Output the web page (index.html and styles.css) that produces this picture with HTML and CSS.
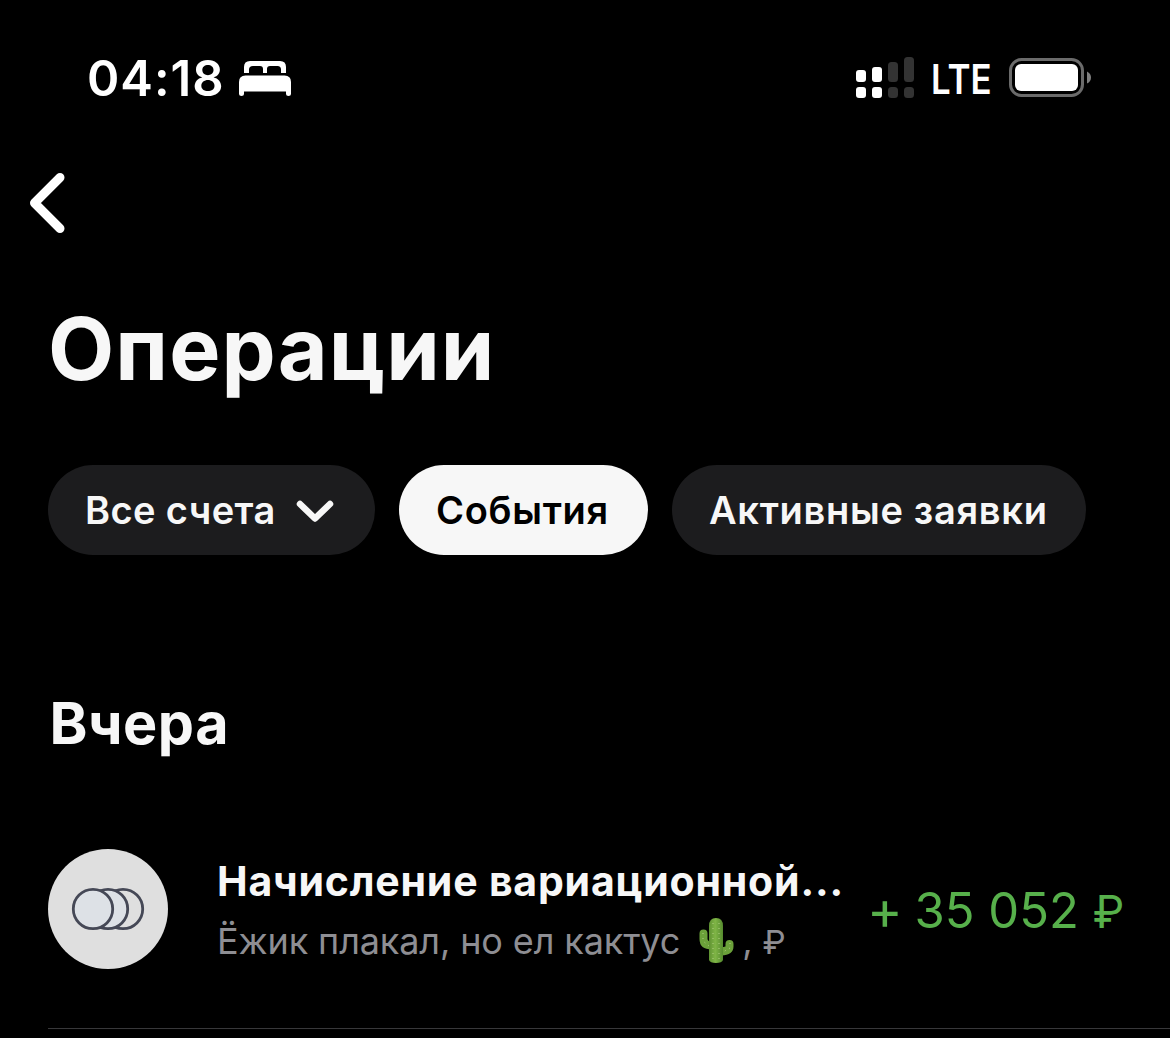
FILE: index.html
```html
<!DOCTYPE html>
<html lang="ru">
<head>
<meta charset="utf-8">
<title>Операции</title>
<link rel="stylesheet" href="styles.css">
</head>
<body>
<header class="status">
  <span class="time">04:18</span>
  <svg class="bed" width="52" height="36" viewBox="0 0 52 36" fill="#fff">
    <path d="M5 12V6Q5 0 11 0H41Q47 0 47 6V12H42V8.500Q42 5 38.500 5H31Q28 5 28 8V12H24V8Q24 5 21 5H14Q10 5 10 8.500V12Z"/>
    <path d="M0 21Q0 14.500 6.500 14.500H45.500Q52 14.500 52 21V33Q52 35 49.500 35Q47 35 47 33V30.500H5V33Q5 35 2.500 35Q0 35 0 33Z"/>
  </svg>
  <svg class="signal" width="58" height="41" viewBox="0 0 58 41">
    <g fill="#fff">
      <rect x="0" y="13" width="10" height="12" rx="3"/><rect x="16" y="10" width="10" height="15" rx="3"/>
      <rect x="0" y="30" width="10" height="11" rx="3"/><rect x="16" y="30" width="10" height="11" rx="3"/>
    </g>
    <g fill="#333">
      <rect x="32" y="5" width="10" height="20" rx="3.500"/><rect x="48" y="0" width="10" height="25" rx="3.500"/>
      <rect x="32" y="30" width="10" height="11" rx="3.500"/><rect x="48" y="30" width="10" height="11" rx="3.500"/>
    </g>
  </svg>
  <span class="network">LTE</span>
  <svg class="battery" width="83" height="40" viewBox="0 0 83 40">
    <rect x="1.500" y="1.500" width="72" height="36" rx="11" fill="none" stroke="#6b6b6b" stroke-width="3"/>
    <rect x="6" y="6" width="63" height="27" rx="6" fill="#fff"/>
    <path d="M78 13.500Q82 15.500 82 19.500T78 25.500Z" fill="#808080"/>
  </svg>
</header>
<nav class="nav">
  <svg width="60" height="72" viewBox="0 0 60 72" fill="none" stroke="#fff" stroke-width="9" stroke-linecap="round" stroke-linejoin="round"><path d="M45 12.500L19.500 38L45 63.500"/></svg>
</nav>
<main>
  <h1 class="title">Операции</h1>
  <div class="chips">
    <button class="chip chip-accounts">Все счета
      <svg width="38" height="24" viewBox="0 0 38 24" fill="none" stroke="#f7f7f7" stroke-width="6.500" stroke-linecap="round" stroke-linejoin="round"><path d="M4 4L19 18.500L34 4"/></svg>
    </button>
    <button class="chip chip-active">События</button>
    <button class="chip chip-orders">Активные заявки</button>
  </div>
  <h2 class="day">Вчера</h2>
  <article class="operation">
    <svg class="avatar" width="120" height="120" viewBox="0 0 120 120" stroke="#454856" stroke-width="2.800">
      <circle cx="60" cy="60" r="60" fill="#dfdfdf" stroke="none"/>
      <circle cx="75" cy="60" r="19.700" fill="#dfdfdf"/>
      <circle cx="60" cy="60" r="19.700" fill="#dde1e6"/>
      <circle cx="45" cy="60" r="19.700" fill="#dde1e6"/>
    </svg>
    <div class="details">
      <div class="name">Начисление вариационной...</div>
      <div class="note"><span>Ёжик плакал, но ел кактус</span>
        <svg class="cactus" width="36" height="46" viewBox="0 0 36 46">
          <defs>
            <linearGradient id="stem"><stop offset="0" stop-color="#5f9232"/><stop offset=".45" stop-color="#7fb546"/><stop offset="1" stop-color="#558a2e"/></linearGradient>
          </defs>
          <path d="M4.500 15.500V21Q4.500 27.500 13 27.500M30.500 26V28.500Q30.500 33 22 33.500" fill="none" stroke="#6ba13a" stroke-width="8" stroke-linecap="round"/>
          <path d="M10 8Q10 0 17 0T24 8V42Q23 45 17 45T10 42Z" fill="url(#stem)"/>
          <path d="M14 5V43M20 5V43M4 15V23L10 28M31 25V30L24 34" fill="none" stroke="#b5d184" stroke-width="1" stroke-dasharray="1 4"/>
        </svg>
        <span>, <span class="note-currency">₽</span></span>
      </div>
    </div>
    <div class="amount"><span class="plus">+</span> 35 052 <span class="currency">₽</span></div>
  </article>
</main>
</body>
</html>
```
FILE: styles.css
```css
* { box-sizing: border-box; }
body {
  margin: 0;
  width: 1170px;
  height: 1038px;
  overflow: hidden;
  background: #000;
  color: #f7f7f7;
  font-family: Inter, "Liberation Sans", sans-serif;
  white-space: nowrap;
}
svg { display: block; flex: none; }
.status {
  display: flex;
  height: 156px;
  padding: 0 78px 0 87px;
  align-items: center;
  color: #fff;
}
.time {
  width: 152px;
  font-size: 49px;
  font-weight: 600;
  letter-spacing: 1px;
}
.bed { margin-top: 1px; }
.signal { margin-left: auto; margin-top: -2px; }
.network {
  width: 61px;
  margin-left: 17px;
  margin-top: 3px;
  font-size: 40.500px;
  font-weight: 600;
  transform: scaleX(.86);
  transform-origin: left;
}
.battery { margin-left: 17px; }
.nav { height: 138px; padding: 9px 15px; }
main { padding-left: 48px; }
.title {
  margin: 0;
  height: 110px;
  line-height: 111px;
  font-size: 86px;
  font-weight: 700;
  letter-spacing: 1.1px;
}
.chips {
  display: flex;
  gap: 24px;
  margin-top: 61px;
}
.chip {
  display: flex;
  align-items: center;
  height: 90px;
  padding: 0 0 0 37px;
  border: 0;
  border-radius: 45px;
  background: #1c1c1e;
  color: #f7f7f7;
  font: 600 38px Inter, "Liberation Sans", sans-serif;
  letter-spacing: .7px;
}
.chip-accounts { width: 327px; gap: 20px; letter-spacing: .4px; }
.chip-accounts svg { margin-top: 4px; }
.chip-active { width: 249px; background: #f7f7f7; color: #000; }
.chip-orders { width: 414px; }
.day {
  margin: 128px 0 0;
  padding-left: 1.5px;
  height: 80px;
  line-height: 80px;
  font-size: 57.500px;
  font-weight: 700;
  letter-spacing: .5px;
}
.operation {
  display: flex;
  height: 240px;
  margin-top: 26px;
  padding-top: 60px;
  border-bottom: 1px solid #38383a;
}
.details {
  flex: none;
  width: 699px;
  padding: 7px 0 0 49px;
}
.name {
  height: 50px;
  line-height: 50px;
  font-size: 41px;
  font-weight: 700;
  letter-spacing: .8px;
}
.note {
  display: flex;
  height: 70px;
  line-height: 70px;
  color: #8e8e93;
  font-size: 36px;
  font-weight: 400;
  letter-spacing: -.12px;
}
.note-currency { font-size: 33px; }
.cactus { margin: 12px 7px 0 19px; }
.amount {
  display: flex;
  flex: none;
  line-height: 124px;
  color: #57b04b;
  font-size: 49px;
  white-space: pre;
}
.plus { font-size: 54px; line-height: 122px; margin-right: -2px; }
.currency { font-size: 45px; line-height: 125px; }
```
